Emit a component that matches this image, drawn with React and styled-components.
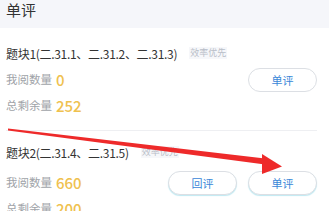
import React from "react";
import styled, { createGlobalStyle } from "styled-components";

const Global = createGlobalStyle`
  html, body { margin: 0; padding: 0; background: #ffffff; }
  body { font-family: "Noto Sans CJK SC", "Noto Sans", sans-serif; overflow: hidden; }
`;

const Page = styled.div`
  position: relative;
  width: 329px;
  height: 211px;
  overflow: hidden;
  background: #ffffff;
`;

const Header = styled.div`
  height: 28px;
  background: #f5f6fa;
  padding: 0 6px;
  font-size: 15px;
  line-height: 20px;
  color: #333333;
  margin-top: -1px;
  padding-top: 1px;
`;

const Block = styled.section`
  padding: ${(p) => (p.$first ? "16px" : "12px")} 12px 0 6px;
`;

const TitleRow = styled.div`
  display: flex;
  align-items: center;
  gap: 12px;
  height: 18px;
`;

const Title = styled.span`
  font-size: 12px;
  letter-spacing: -0.3px;
  color: #333333;
  white-space: nowrap;
`;

const Tag = styled.span`
  font-size: 9px;
  line-height: 12px;
  color: #b9bec8;
  background: #f6f7fa;
  padding: 0 1px;
`;

const Body = styled.div`
  display: flex;
  justify-content: space-between;
  align-items: flex-start;
  margin-top: ${(p) => p.$offset || 0}px;
`;

const Stats = styled.div`
  display: flex;
  flex-direction: column;
`;

const Stat = styled.div`
  display: flex;
  align-items: center;
  gap: 4px;
  height: 26px;
`;

const Label = styled.span`
  font-size: 11.5px;
  color: #a0a3a8;
`;

const Value = styled.span`
  font-size: 15px;
  color: #efc14f;
  font-weight: 500;
`;

const Actions = styled.div`
  display: flex;
  gap: 11px;
  margin-top: 2px;
`;

const Pill = styled.button`
  width: 69px;
  height: 24px;
  border-radius: 12px;
  border: 1px solid #dcdfe4;
  background: #ffffff;
  color: #3a87d8;
  font-family: inherit;
  font-size: 11px;
  padding: 0;
  box-shadow: ${(p) => (p.$glow ? "0 1px 1px #bfe9f2" : "none")};
`;

const Divider = styled.div`
  height: 1px;
  background: #eeeff2;
  margin-top: 12px;
`;

const Annotation = styled.svg`
  position: absolute;
  left: 0;
  top: 0;
  pointer-events: none;
`;

const blocks = [
  {
    title: "题块1(二.31.1、二.31.2、二.31.3)",
    mine: 0,
    left: 252,
    review: false,
  },
  {
    title: "题块2(二.31.4、二.31.5)",
    mine: 660,
    left: 200,
    review: true,
  },
];

export default function App() {
  return (
    <>
      <Global />
      <Page>
        <Header>单评</Header>
        {blocks.map((b, i) => (
          <Block key={i} $first={i === 0}>
            <TitleRow>
              <Title>{b.title}</Title>
              <Tag>效率优先</Tag>
            </TitleRow>
            <Body $offset={i === 0 ? 4 : 8}>
              <Stats>
                <Stat>
                  <Label>我阅数量</Label>
                  <Value>{b.mine}</Value>
                </Stat>
                <Stat>
                  <Label>总剩余量</Label>
                  <Value>{b.left}</Value>
                </Stat>
              </Stats>
              <Actions>
                {b.review && <Pill $glow>回评</Pill>}
                <Pill $glow={b.review}>单评</Pill>
              </Actions>
            </Body>
            {i === 0 && <Divider />}
          </Block>
        ))}
        <Annotation width="329" height="211" viewBox="0 0 329 211">
          <polygon points="8,128.5 265,158.5 265,164.5 8,130.5" fill="#ee2a2a" />
          <polygon points="262,154 282,166.5 262,174" fill="#ee2a2a" />
        </Annotation>
      </Page>
    </>
  );
}
